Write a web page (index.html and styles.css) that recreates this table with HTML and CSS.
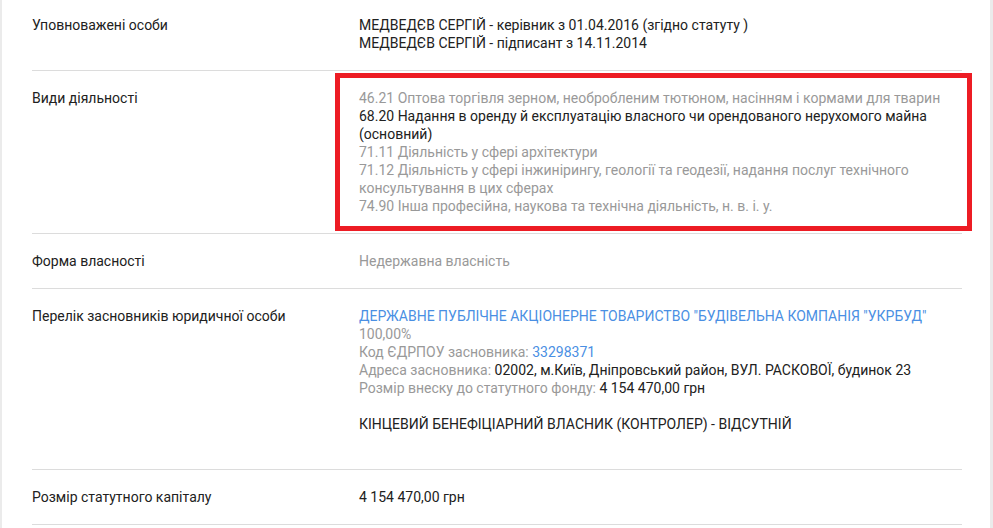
FILE: index.html
```html
<!DOCTYPE html>
<html lang="uk">
<head>
    <meta charset="UTF-8">
    <meta name="viewport" content="width=device-width, initial-scale=1.0">
    <title>Відомості про юридичну особу</title>
    <link rel="stylesheet" href="styles.css">
</head>
<body>

    <div class="card">
        <div class="row first">
            <div class="label">Уповноважені особи</div>
            <div class="value">
                МЕДВЕДЄВ СЕРГІЙ - керівник з 01.04.2016 (згідно статуту )<br>
                МЕДВЕДЄВ СЕРГІЙ - підписант з 14.11.2014
            </div>
        </div>

        <div class="row">
            <div class="label">Види діяльності</div>
            <div class="value marked">
                <div class="muted">46.21 Оптова торгівля зерном, необробленим тютюном, насінням і кормами для тварин</div>
                <div>68.20 Надання в оренду й експлуатацію власного чи орендованого нерухомого майна (основний)</div>
                <div class="muted">71.11 Діяльність у сфері архітектури</div>
                <div class="muted">71.12 Діяльність у сфері інжинірингу, геології та геодезії, надання послуг технічного консультування в цих сферах</div>
                <div class="muted">74.90 Інша професійна, наукова та технічна діяльність, н. в. і. у.</div>
            </div>
        </div>

        <div class="row">
            <div class="label">Форма власності</div>
            <div class="value muted">Недержавна власність</div>
        </div>

        <div class="row">
            <div class="label">Перелік засновників юридичної особи</div>
            <div class="value">
                <a class="link" href="#">ДЕРЖАВНЕ ПУБЛІЧНЕ АКЦІОНЕРНЕ ТОВАРИСТВО "БУДІВЕЛЬНА КОМПАНІЯ "УКРБУД"</a><br>
                <span class="muted">100,00%</span><br>
                <span class="muted">Код ЄДРПОУ засновника:</span> <a class="link" href="#">33298371</a><br>
                <span class="muted">Адреса засновника:</span> 02002, м.Київ, Дніпровський район, ВУЛ. РАСКОВОЇ, будинок 23<br>
                <span class="muted">Розмір внеску до статутного фонду:</span> 4 154 470,00 грн
                <p class="owner">КІНЦЕВИЙ БЕНЕФІЦІАРНИЙ ВЛАСНИК (КОНТРОЛЕР) - ВІДСУТНІЙ</p>
            </div>
        </div>

        <div class="row">
            <div class="label">Розмір статутного капіталу</div>
            <div class="value">4 154 470,00 грн</div>
        </div>
    </div>

</body>
</html>
```

FILE: styles.css
```css
body {
    margin: 0;
    padding: 0;
    background-color: #ebebeb;
    font-family: Roboto, 'Liberation Sans', sans-serif;
    font-size: 14px;
    line-height: 18px;
    color: #212121;
}

.card {
    background-color: #fff;
    margin: -1px 3px 0 2px;
    padding: 0 28px 0 30px;
    min-height: 530px;
}

.row {
    display: flex;
    padding: 18px 0;
    border-bottom: 1px solid #dcdcdc;
}

.row.first {
    padding-top: 17px;
}

.label {
    width: 327px;
    flex-shrink: 0;
}

.value {
    flex: 1;
    padding-right: 20px;
}

.muted {
    color: #999;
}

.link {
    color: #4a8fe3;
    text-decoration: none;
}

.owner {
    margin: 18px 0;
}

/* red frame drawn over the activity list */
.marked {
    position: relative;
}

.marked::after {
    content: '';
    position: absolute;
    left: -24px;
    top: -16px;
    right: -10px;
    bottom: -16px;
    border: 5px solid #ed1c24;
}
```
